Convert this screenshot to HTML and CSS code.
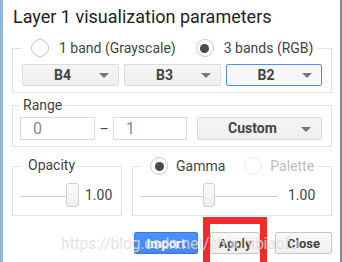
FILE: index.html
```html
<!DOCTYPE html>
<html lang="en">
<head>
    <meta charset="UTF-8">
    <title>Layer 1 visualization parameters</title>
    <link rel="stylesheet" href="styles.css">
</head>
<body>
    <div class="dialog">
        <h1 class="title">Layer 1 visualization parameters</h1>

        <fieldset class="group bands">
            <legend>
                <label class="radio"><span class="dot"></span>1 band (Grayscale)</label>
                <label class="radio checked"><span class="dot"></span>3 bands (RGB)</label>
            </legend>
            <div class="selects">
                <div class="select">B4</div>
                <div class="select">B3</div>
                <div class="select focus">B2</div>
            </div>
        </fieldset>

        <fieldset class="group range">
            <legend>Range</legend>
            <div class="range-row">
                <div class="input">0</div>
                <span class="dash">–</span>
                <div class="input">1</div>
                <div class="select custom">Custom</div>
            </div>
        </fieldset>

        <div class="pair">
            <fieldset class="group opacity">
                <legend>Opacity</legend>
                <div class="slider">
                    <span class="line" style="width: 46px"></span>
                    <span class="thumb"></span>
                    <span class="value">1.00</span>
                </div>
            </fieldset>
            <fieldset class="group gamma">
                <legend>
                    <label class="radio checked"><span class="dot"></span>Gamma</label>
                    <label class="radio off"><span class="dot"></span>Palette</label>
                </legend>
                <div class="slider">
                    <span class="line" style="width: 63px"></span>
                    <span class="thumb"></span>
                    <span class="line" style="width: 63px"></span>
                    <span class="value">1.00</span>
                </div>
            </fieldset>
        </div>

        <div class="actions">
            <button class="btn primary">Import</button>
            <span class="marked">
                <button class="btn">Apply</button>
                <span class="highlight"></span>
            </span>
            <button class="btn close">Close</button>
        </div>

        <!-- blog watermark over the buttons -->
        <div class="watermark">https://blog.csdn.net/zhouhibiaofu</div>
    </div>
</body>
</html>
```

FILE: styles.css
```css
* {
    box-sizing: border-box;
}
body {
    margin: 0;
    background: white;
    font-family: Roboto, "Liberation Sans", sans-serif;
    color: #444;
}
.dialog {
    position: relative;
    width: 342px;
    height: 262px;
    overflow: hidden;
    padding-left: 9px;
    border-left: 3px solid #8cb6e2;
    border-right: 2px solid #858a90;
}
.title {
    margin: 0;
    padding: 6px 0 0 1px;
    font-size: 18px;
    line-height: 22px;
    font-weight: normal;
    color: #222;
}
.group {
    margin: 0;
    border: 1px solid #e2e2e2;
    min-width: 0;
}
.group legend {
    font-size: 14px;
    line-height: 17px;
}
.bands {
    width: 320px;
    margin-top: 10px;
    padding: 0 9px 6px;
}
.bands legend {
    display: flex;
    align-items: center;
    height: 20px;
    padding: 0 5px 0 9px;
}
.radio {
    display: flex;
    align-items: center;
    font-size: 14px;
    color: #444;
}
.radio + .radio {
    margin-left: 20px;
}
.dot {
    display: flex;
    align-items: center;
    justify-content: center;
    width: 18px;
    height: 18px;
    margin-right: 10px;
    border: 1px solid #c9c9c9;
    border-radius: 50%;
    background: #fff;
}
.checked .dot::after {
    content: "";
    width: 9px;
    height: 9px;
    border-radius: 50%;
    background: #4a4a4a;
}
.off {
    color: #bdbdbd;
}
.off .dot {
    border-color: #ececec;
}
.selects {
    display: flex;
    gap: 5px;
    margin-top: 6px;
}
.select {
    position: relative;
    flex: 0 0 97px;
    height: 22px;
    padding-right: 16px;
    border: 1px solid #dcdcdc;
    border-radius: 2px;
    background: linear-gradient(#f5f5f5, #efefef);
    font-size: 14px;
    font-weight: bold;
    line-height: 20px;
    text-align: center;
    color: #444;
}
.select::after {
    content: "";
    position: absolute;
    right: 9px;
    top: 8px;
    border-left: 5px solid transparent;
    border-right: 5px solid transparent;
    border-top: 5px solid #777;
}
.select.focus {
    flex-basis: 96px;
    border-color: #4d90fe;
    background: #f7f7f7;
}
.range {
    width: 320px;
    margin-top: 4px;
    padding: 0 9px 6px 7px;
}
.range legend {
    padding: 0 3px;
}
.range-row {
    display: flex;
    align-items: center;
    margin-top: 3px;
}
.input {
    width: 75px;
    height: 23px;
    padding-left: 12px;
    border: 1px solid #dadada;
    font-size: 16px;
    line-height: 21px;
    color: #8a8a8a;
}
.dash {
    width: 18px;
    text-align: center;
    font-size: 14px;
    color: #444;
}
.input + .dash + .input {
    width: 74px;
}
.select.custom {
    flex: 0 0 125px;
    height: 23px;
    margin-left: 10px;
    padding-right: 14px;
    line-height: 21px;
}
.select.custom::after {
    top: 9px;
    right: 10px;
}
.pair {
    display: flex;
    gap: 10px;
    margin-top: 10px;
}
.opacity {
    width: 110px;
    padding: 0 7px 8px;
}
.opacity legend {
    height: 18px;
    padding: 0 2px 0 8px;
}
.gamma {
    width: 200px;
    padding: 0 7px 8px;
}
.gamma legend {
    display: flex;
    align-items: center;
    height: 18px;
    padding: 0 4px 0 10px;
}
.gamma .radio .dot {
    margin-right: 8px;
}
.gamma .radio + .radio {
    margin-left: 19px;
}
.slider {
    display: flex;
    align-items: center;
    height: 24px;
    margin-top: 8px;
}
.line {
    height: 1px;
    margin-top: 2px;
    background: #cfcfcf;
}
.thumb {
    width: 13px;
    height: 24px;
    border: 1px solid #cfcfcf;
    border-radius: 3px;
    background: linear-gradient(#fbfbfb, #eeeeee);
}
.gamma .thumb {
    width: 12px;
}
.value {
    margin-left: 6px;
    font-size: 14px;
    color: #444;
}
.gamma .value {
    margin-left: 10px;
}
.actions {
    display: flex;
    justify-content: flex-end;
    margin-top: 16px;
    padding-right: 8px;
}
.btn {
    height: 22px;
    padding: 0;
    border: 1px solid #c6c6c6;
    border-radius: 2px;
    background: linear-gradient(#f8f8f8, #f1f1f1);
    font-family: Roboto, "Liberation Sans", sans-serif;
    font-size: 13px;
    font-weight: bold;
    color: #444;
}
.btn.primary {
    width: 64px;
    border-color: #3079ed;
    background: linear-gradient(#4d90fe, #4787ed);
    color: white;
}
.marked {
    position: relative;
    margin-left: 12px;
}
.marked .btn {
    width: 50px;
}
.btn.close {
    width: 57px;
    margin-left: 15px;
}
.highlight {
    position: absolute;
    left: -7px;
    top: -15px;
    width: 64px;
    height: 52px;
    border: 7px solid #f02b2b;
}
.watermark {
    position: absolute;
    left: 58px;
    top: 234px;
    font-size: 16px;
    letter-spacing: -0.3px;
    color: rgba(222, 222, 222, 0.85);
    white-space: nowrap;
}
```
